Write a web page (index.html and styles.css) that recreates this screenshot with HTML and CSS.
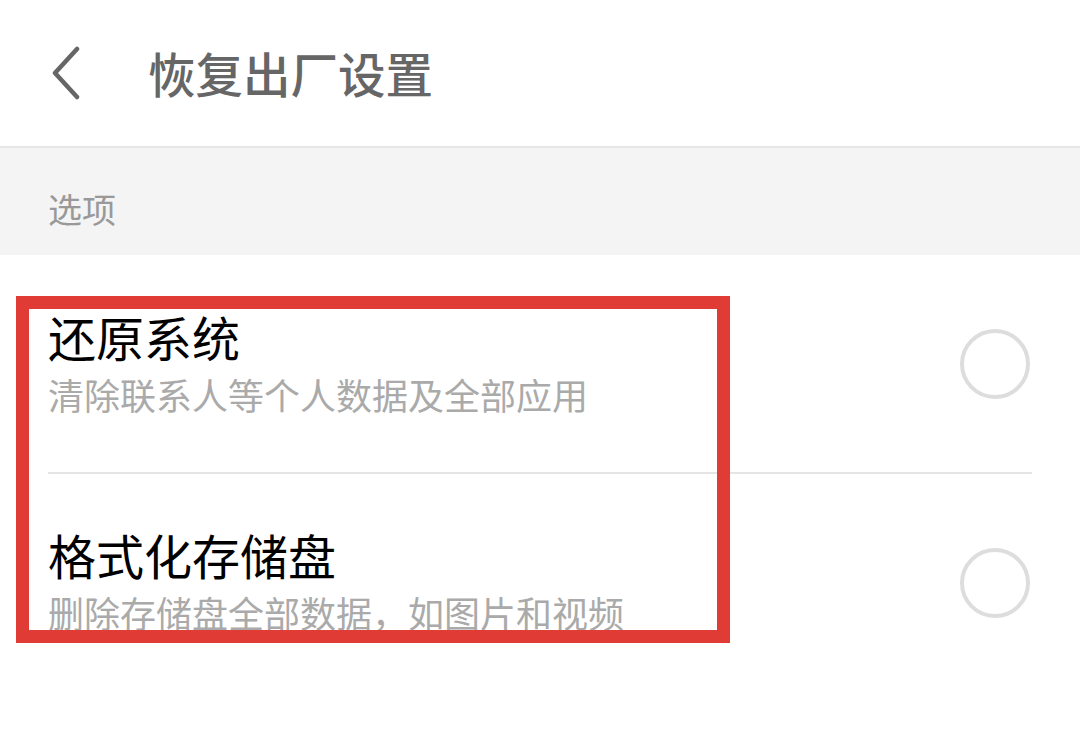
FILE: index.html
```html
<!DOCTYPE html>
<html lang="zh-CN">
<head>
<meta charset="utf-8">
<title>恢复出厂设置</title>
<link rel="stylesheet" href="styles.css">
</head>
<body>
<div class="page">
  <header class="header">
    <svg class="back" width="32" height="54" viewBox="0 0 32 54">
      <polyline points="27,3 5,27 27,51" fill="none" stroke="#666" stroke-width="4.5" stroke-linecap="round" stroke-linejoin="round"/>
    </svg>
    <h1 class="title">恢复出厂设置</h1>
  </header>
  <div class="section">选项</div>
  <div class="list">
    <div class="item">
      <div class="text">
        <div class="item-title">还原系统</div>
        <div class="item-sub">清除联系人等个人数据及全部应用</div>
      </div>
      <div class="radio"></div>
    </div>
    <div class="divider"></div>
    <div class="item item2">
      <div class="text">
        <div class="item-title">格式化存储盘</div>
        <div class="item-sub">删除存储盘全部数据，如图片和视频</div>
      </div>
      <div class="radio"></div>
    </div>
  </div>
  <div class="highlight"></div>
</div>
</body>
</html>
```
FILE: styles.css
```css
html, body {
  margin: 0;
  padding: 0;
  background: #ffffff;
}
body {
  font-family: "Noto Sans CJK SC", "Noto Sans", sans-serif;
}
.page {
  position: relative;
  width: 1080px;
  height: 741px;
  overflow: hidden;
  background: #ffffff;
}
.header {
  height: 146px;
  display: flex;
  align-items: center;
  border-bottom: 2px solid #e6e6e6;
}
.back {
  margin-left: 50px;
  flex: none;
}
.title {
  margin: 0 0 0 66px;
  font-size: 47.5px;
  font-weight: 500;
  color: #666666;
  line-height: 60px;
}
.section {
  height: 107px;
  background: #f4f4f4;
  box-sizing: border-box;
  padding: 39px 0 0 48px;
  font-size: 34px;
  color: #999999;
  line-height: 44px;
}
.item {
  height: 217px;
  display: flex;
  align-items: center;
  padding: 0 50px 0 48px;
  box-sizing: border-box;
}
.text {
  flex: 1;
  padding-top: 3px;
}
.item2 .text {
  padding-top: 0;
}
.item-title {
  font-size: 48px;
  color: #000000;
  line-height: 58px;
}
.item-sub {
  font-size: 36px;
  color: #aaaaaa;
  line-height: 58px;
}
.radio {
  width: 70px;
  height: 70px;
  box-sizing: border-box;
  border: 4px solid #dddddd;
  border-radius: 50%;
  flex: none;
}
.divider {
  height: 2px;
  margin: 0 48px;
  background: #e5e5e5;
}
.highlight {
  position: absolute;
  left: 16px;
  top: 296px;
  width: 714px;
  height: 347px;
  box-sizing: border-box;
  border: 13px solid #e03b35;
}
```
